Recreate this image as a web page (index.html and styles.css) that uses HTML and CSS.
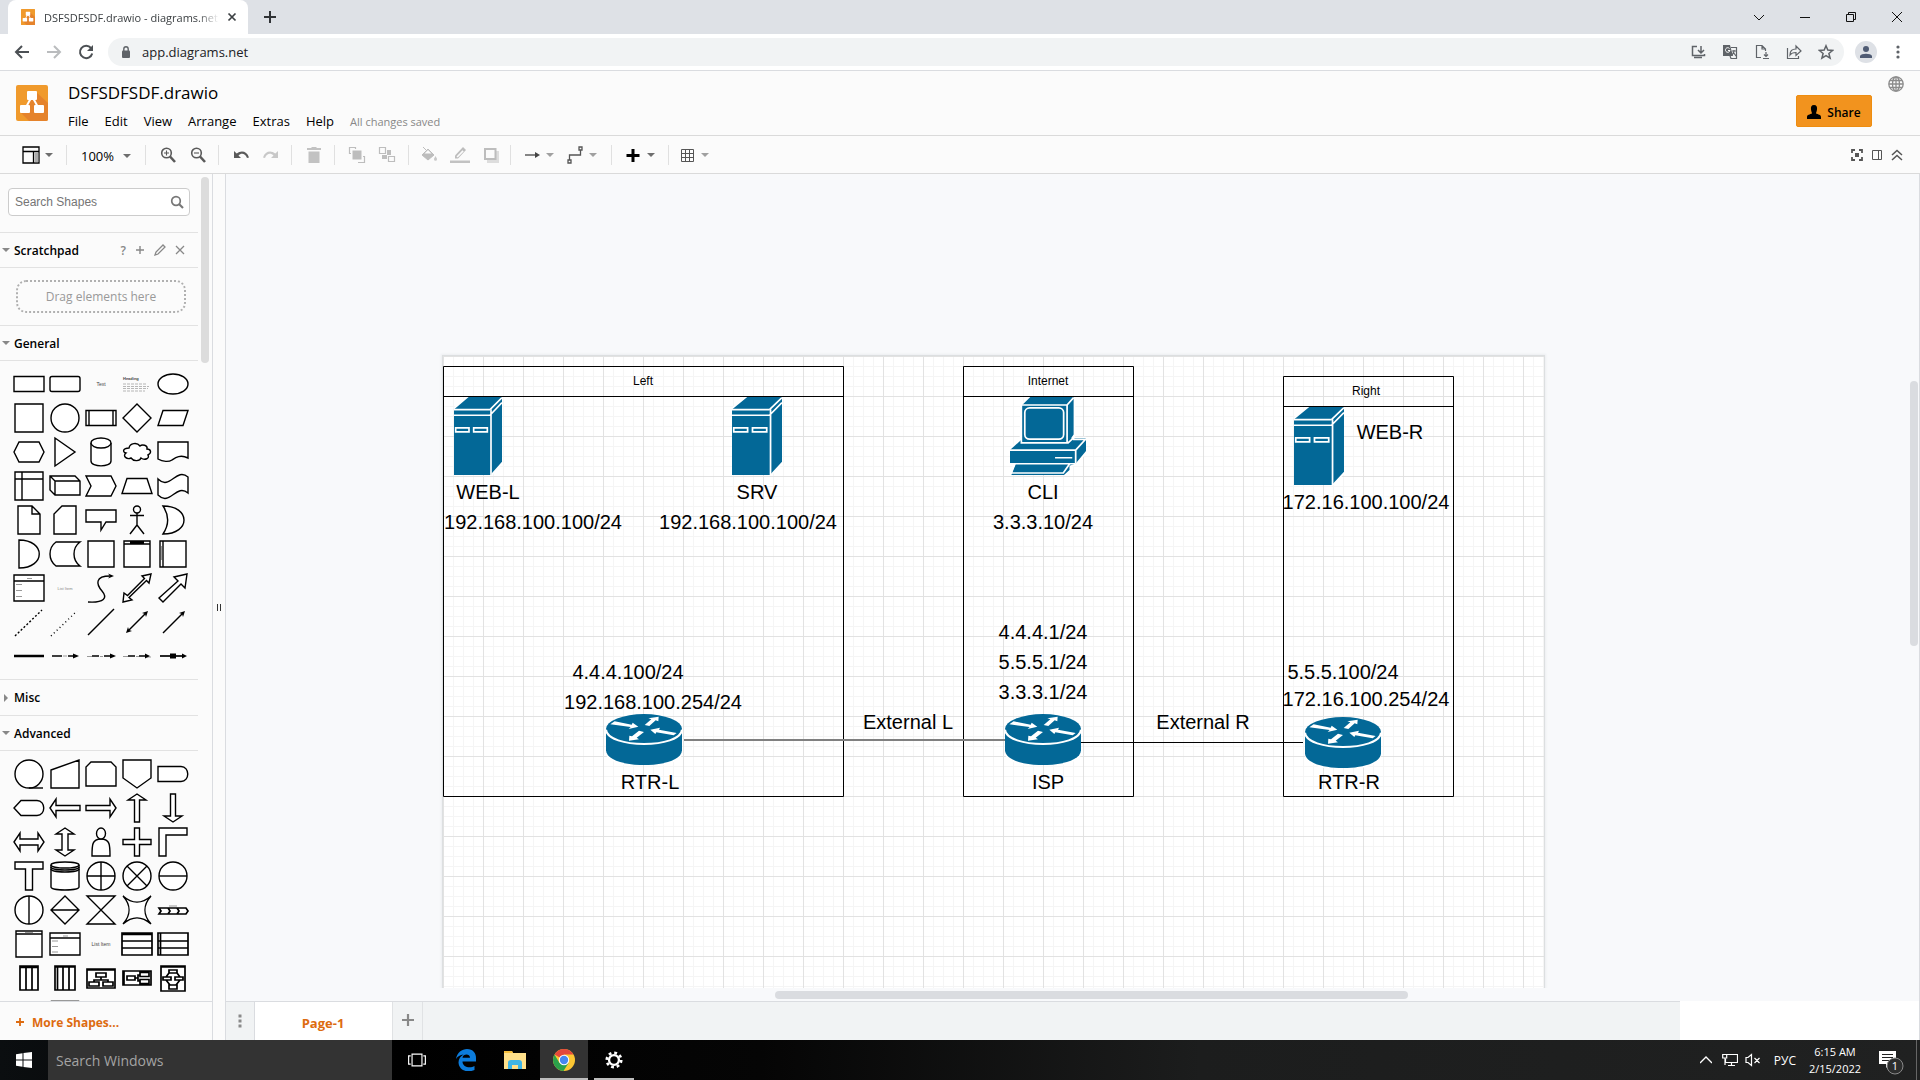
FILE: index.html
```html
<!DOCTYPE html>
<html lang="en">
<head>
<meta charset="utf-8">
<title>DSFSDFSDF.drawio - diagrams.net</title>
<link rel="stylesheet" href="styles.css">
</head>
<body>
<svg class="defs" aria-hidden="true">
  <symbol id="caret" viewBox="0 0 8 4"><path d="M0 0h8L4 4z" fill="currentColor"/></symbol>
  <symbol id="app-logo" viewBox="0 0 32 36" preserveAspectRatio="none">
    <rect width="32" height="36" rx="2" fill="#f09a2c"/>
    <path d="M19 6L32 18V34a2 2 0 0 1-2 2H13L5 28z" fill="#e5832c"/>
    <path d="M15 13L9 24M17 13l6 11" stroke="#fff" stroke-width="2"/>
    <rect x="11" y="6" width="10" height="9" rx="1" fill="#fff"/>
    <rect x="4" y="20" width="10" height="8" rx="1" fill="#fff"/>
    <rect x="18" y="20" width="10" height="8" rx="1" fill="#fff"/>
  </symbol>
  <symbol id="server" viewBox="72 155 144 235" preserveAspectRatio="none">
    <path d="M72 193L116 155H216V350L184 386V390H72z" fill="#036897" stroke="#fff" stroke-width="10" paint-order="stroke"/>
    <path d="M72 193H180M72 210H180L216 172M180 193L216 157M183 193V390" fill="none" stroke="#fff" stroke-width="5"/>
    <path d="M77 248h40v12H77zM131 248h41v12h-41z" fill="#036897" stroke="#fff" stroke-width="5"/>
  </symbol>
  <symbol id="router" viewBox="528 312 228 153">
    <path d="M528 357V421C530 480 754 480 756 421V357z" fill="#036897" stroke="#fff" stroke-width="10" paint-order="stroke"/>
    <ellipse cx="642" cy="357" rx="114" ry="45" fill="#036897"/>
    <path d="M528 359C532 416 752 416 756 359" fill="none" stroke="#fff" stroke-width="6"/>
    <path d="M554 334L605 344 608 338 625 350 596 357 602 351 541 343zM644 345L664 328 655 325 686 320 685 334 677 331 658 348zM661 359L690 353 687 359 740 369 731 376 679 367 676 372zM627 362L642 366 620 383 627 388 597 392 598 377 606 379z" fill="#fff"/>
  </symbol>
  <symbol id="pc" viewBox="203 155 221 235" preserveAspectRatio="none">
    <path d="M238 180L262 155H388V268L380 280H424V318L394 355 376 362 376 375 360 390H207L220 357H203V315L236 284z" fill="#036897" stroke="#fff" stroke-width="10" paint-order="stroke"/>
    <path d="M238 179H369L388 157M369 179V293M236 179V293H372L392 274M388 276V283H424M203 315H394L424 281M394 315V355M203 356H394M216 356L206 384H358L376 357M334 338H384" fill="none" stroke="#fff" stroke-width="5"/>
    <rect x="246" y="188" width="113" height="94" rx="14" fill="#036897" stroke="#fff" stroke-width="5"/>
  </symbol>
</svg>

<header class="tabstrip">
  <div class="tab">
    <svg class="i16" viewBox="0 0 32 36"><use href="#app-logo"/></svg>
    <span class="tab-title">DSFSDFSDF.drawio - diagrams.net</span>
    <button class="bare" aria-label="Close tab"><svg class="i10" viewBox="0 0 10 10"><path d="M1.500 1.500l7 7M8.500 1.500l-7 7" stroke="#3c4043" stroke-width="1.700"/></svg></button>
  </div>
  <button class="bare newtab" aria-label="New tab"><svg class="i12" viewBox="0 0 12 12"><path d="M6 0v12M0 6h12" stroke="#303336" stroke-width="2"/></svg></button>
  <div class="window-controls">
    <button class="bare" aria-label="Search tabs"><svg class="i12" viewBox="0 0 12 12"><path d="M1 4l5 5 5-5" class="ln"/></svg></button>
    <button class="bare" aria-label="Minimize"><svg class="i12" viewBox="0 0 12 12"><path d="M1 6.500h10" class="ln"/></svg></button>
    <button class="bare" aria-label="Restore"><svg class="i12" viewBox="0 0 12 12"><path d="M1.500 3.500h7v7h-7zM3.500 3V1.500h7v7H9" class="ln"/></svg></button>
    <button class="bare" aria-label="Close"><svg class="i12" viewBox="0 0 12 12"><path d="M1 1l10 10M11 1L1 11" class="ln"/></svg></button>
  </div>
</header>

<div class="addressbar">
  <button class="bare nav" aria-label="Back"><svg class="i16" viewBox="0 0 16 16"><path d="M15 8H2M8 2L2 8l6 6" stroke="#4c5054" stroke-width="2" fill="none"/></svg></button>
  <button class="bare nav" aria-label="Forward"><svg class="i16" viewBox="0 0 16 16"><path d="M1 8h13M8 2l6 6-6 6" stroke="#babcbe" stroke-width="2" fill="none"/></svg></button>
  <button class="bare nav" aria-label="Reload"><svg class="i16" viewBox="0 0 16 16"><path d="M13 4a6.200 6.200 0 1 0 1.200 5.500" stroke="#4c5054" stroke-width="2" fill="none"/><path d="M15 1v6H9z" fill="#4c5054"/></svg></button>
  <div class="omnibox">
    <svg class="i12" viewBox="0 0 12 12"><rect x="2" y="4.500" width="8" height="7.500" rx="1" fill="#5f6368"/><path d="M3.800 5V3a2.200 2.200 0 0 1 4.400 0v2" stroke="#5f6368" stroke-width="1.400" fill="none"/></svg>
    <input type="text" aria-label="Address" value="app.diagrams.net">
    <div class="omni-icons">
      <button class="bare" aria-label="Install"><svg class="i16" viewBox="0 0 16 16"><path d="M7 2.500H2.500v9h12V10M11 2v6M8 6l3 3 3-3M4 13.500h8" class="om"/></svg></button>
      <button class="bare" aria-label="Translate"><svg class="i16" viewBox="0 0 16 16"><path d="M1 1h7l3 11H1z" fill="#5f6368"/><path d="M9 3.500h5.500v11H9l-1-2.500M10 7h4M12 6v1c0 2-1 3-2 4M11 8l3 4" class="om thin"/><path d="M7.500 4.500a2.300 2.300 0 1 0 .5 2H6" stroke="#fff" fill="none"/></svg></button>
      <button class="bare" aria-label="Save page"><svg class="i16" viewBox="0 0 16 16"><path d="M7 13.500H2.500v-12H8L11.500 5v2M8 1.500V5h3M12 8v4M10 10.500l2 2 2-2M9 14.500h6" class="om thin"/></svg></button>
      <button class="bare" aria-label="Share page"><svg class="i16" viewBox="0 0 16 16"><path d="M1.500 4v10.500h11V12M4 11c0-4 2-6 6-6V2l5 5-5 4.500V8.500C7 8.500 5 9.500 4 11z" class="om thin"/></svg></button>
      <button class="bare" aria-label="Bookmark"><svg class="i16" viewBox="0 0 16 16"><path d="M8 1.800l1.800 4.300 4.700.4-3.600 3 1.200 4.700L8 11.700l-4.100 2.500 1.200-4.700-3.600-3 4.700-.4z" class="om"/></svg></button>
    </div>
  </div>
  <button class="bare profile" aria-label="Profile"><svg class="i12" viewBox="0 0 12 12"><circle cx="6" cy="3" r="3" fill="#4f5b73"/><path d="M0 12V10c1-3 11-3 12 0v2z" fill="#4f5b73"/></svg></button>
  <button class="bare more" aria-label="Menu"><svg class="i16" viewBox="0 0 16 16" fill="#5f6368"><circle cx="8" cy="3" r="1.600"/><circle cx="8" cy="8" r="1.600"/><circle cx="8" cy="13" r="1.600"/></svg></button>
</div>

<div class="appheader">
  <svg class="logo" viewBox="0 0 32 36"><use href="#app-logo"/></svg>
  <div class="titles">
    <h1>DSFSDFSDF.drawio</h1>
    <nav class="menus">
      <a href="#file">File</a><a href="#edit">Edit</a><a href="#view">View</a><a href="#arrange">Arrange</a><a href="#extras">Extras</a><a href="#help">Help</a><span class="status">All changes saved</span>
    </nav>
  </div>
  <button class="share"><svg class="i14" viewBox="0 0 14 14"><path d="M7 0C4.500 0 3.600 2 4 4.500 4.200 6.500 5 7.500 5 8.500 3 9.500 0 9.500 0 12v2h14v-2c0-2.500-3-2.500-5-3.500 0-1 .8-2 1-4C10.400 2 9.500 0 7 0z"/></svg>Share</button>
  <button class="bare globe" aria-label="Language"><svg class="i16" viewBox="0 0 16 16" fill="none" stroke="#8c8c8c" stroke-width="1.300"><circle cx="8" cy="8" r="7.200"/><ellipse cx="8" cy="8" rx="3.500" ry="7.200"/><path d="M8 1v14M1 8h14M2 4.500h12M2 11.500h12"/></svg></button>
</div>

<div class="toolbar">
  <div class="group g-panel"><button class="tool dark" aria-label="View"><svg class="i18" viewBox="0 0 18 18"><path d="M1 1h16v16H1zM1 5.500h16M11.500 5.500V17" fill="none" stroke="#000" stroke-width="1.300"/><path d="M12.500 6.500h3.700v9.700h-3.700z" fill="#aaa"/></svg><svg class="caret"><use href="#caret"/></svg></button></div>
  <div class="group g-zoom"><button class="tool zoomlevel">100%<svg class="caret"><use href="#caret"/></svg></button></div>
  <div class="group w73">
    <button class="tool" aria-label="Zoom in"><svg class="i18" viewBox="0 0 18 18"><circle cx="7.500" cy="7" r="4.800" class="tl"/><path d="M11 10.500l5 5.500" stroke="#5a5a5a" stroke-width="2.600"/><path d="M7.500 4.500v5M5 7h5" class="tl s1"/></svg></button>
    <button class="tool" aria-label="Zoom out"><svg class="i18" viewBox="0 0 18 18"><circle cx="7.500" cy="7" r="4.800" class="tl"/><path d="M11 10.500l5 5.500" stroke="#5a5a5a" stroke-width="2.600"/><path d="M5 7h5" class="tl s1"/></svg></button>
  </div>
  <div class="group w73">
    <button class="tool" aria-label="Undo"><svg class="i18" viewBox="0 0 18 18"><path d="M2 5v7h7L6.500 9.500C9 7 13 7 15 12l2-.6C15 5 9 4 4.700 7.500z" fill="#5a5a5a"/></svg></button>
    <button class="tool" aria-label="Redo"><svg class="i18" viewBox="0 0 18 18"><path d="M16 5v7H9l2.500-2.500C9 7 5 7 3 12l-2-.6C3 5 9 4 13.300 7.500z" fill="#c8c8c8"/></svg></button>
  </div>
  <div class="group w43"><button class="tool" aria-label="Delete"><svg class="i18" viewBox="0 0 18 18"><path d="M2 2h4l1-1h4l1 1h4v2H2zM3.500 5.500h11V17h-11z" fill="#c2c2c2"/></svg></button></div>
  <div class="group w74">
    <button class="tool" aria-label="To front"><svg class="i18" viewBox="0 0 18 18"><path d="M4.500 4.500h9v9h-9z" fill="#bdbdbd"/><path d="M3 7.500H1.500v-6h6V3M10 16.500h6.500v-6H15" class="tg"/></svg></button>
    <button class="tool" aria-label="To back"><svg class="i18" viewBox="0 0 18 18"><path d="M1.500 1.500h6v6h-6zM10.500 10.500h6v5h-6z" class="tg"/><path d="M9 4h4v5H9v4H4V9h5z" fill="#bdbdbd"/></svg></button>
  </div>
  <div class="group w102">
    <button class="tool" aria-label="Fill color"><svg class="i18" viewBox="0 0 18 18"><path d="M3 1l3 3M2 9l6-6 6 6-6 5z" fill="#bdbdbd" stroke="#bdbdbd"/><path d="M4.500 7.500L8 4l3.500 3.500z" fill="#fbfbfb"/><path d="M15.500 10c1 2 1.500 2 1.500 3.200a1.500 1.500 0 0 1-3 0c0-1.200.5-1.200 1.500-3.200z" fill="#c8c8c8"/></svg></button>
    <button class="tool" aria-label="Line color"><svg class="i20" viewBox="0 0 20 18"><path d="M5 12.500V9.500L13 1l3 3-8 8.500z" fill="#bdbdbd"/><path d="M6.500 10.500l6-6.300 1.200 1.200-6 6z" fill="#fbfbfb"/><path d="M0 14.500h20V17H0z" fill="#c2c2c2"/></svg></button>
    <button class="tool" aria-label="Shadow"><svg class="i18" viewBox="0 0 18 18"><path d="M5 5h12v12H5z" fill="#ddd"/><path d="M3 3h10.500v10H3z" fill="#fbfbfb" stroke="#bdbdbd" stroke-width="2"/></svg></button>
  </div>
  <div class="group w101">
    <button class="tool" aria-label="Connection"><svg class="i18" viewBox="0 0 18 18"><path d="M2 9h10" stroke="#444" stroke-width="1.300"/><path d="M12 6l5 3-5 3z" fill="#444"/></svg><svg class="caret faint"><use href="#caret"/></svg></button>
    <button class="tool" aria-label="Waypoints"><svg class="i18" viewBox="0 0 18 18"><path d="M3.500 14V9H14.500V4M2 14h3v3H2zM13 1h3v3h-3z" fill="none" stroke="#555" stroke-width="1.300"/></svg><svg class="caret faint"><use href="#caret"/></svg></button>
  </div>
  <div class="group w57"><button class="tool" aria-label="Insert"><svg class="i18" viewBox="0 0 18 18"><path d="M9 3v13M2.500 9.500h13" stroke="#000" stroke-width="3"/></svg><svg class="caret"><use href="#caret"/></svg></button></div>
  <div class="group g-last"><button class="tool" aria-label="Table"><svg class="i18" viewBox="0 0 18 18"><path d="M3.500 3.500h12v12h-12zM7.500 3.500v12M11.500 3.500v12M3.500 7.500h12M3.500 11.500h12" fill="none" stroke="#555"/></svg><svg class="caret faint"><use href="#caret"/></svg></button></div>
  <div class="toolbar-right">
    <button class="bare" aria-label="Fullscreen"><svg class="i12" viewBox="0 0 12 12"><path d="M4 1H1v3M8 1h3v3M1 8v3h3M11 8v3H8" fill="none" stroke="#555" stroke-width="1.800"/><path d="M4 4h4v4H4z" fill="#555"/></svg></button>
    <button class="bare" aria-label="Format"><svg class="i12" viewBox="0 0 12 12"><path d="M1.500 1.500h9v9h-9zM7.500 1.500v9" fill="none" stroke="#555"/></svg></button>
    <button class="bare" aria-label="Collapse"><svg class="i12" viewBox="0 0 12 12"><path d="M1 6l5-4.500L11 6M1 11l5-4.500 5 4.500" fill="none" stroke="#555" stroke-width="1.500"/></svg></button>
  </div>
</div>

<main class="workspace">
  <aside class="sidebar">
    <div class="sidebar-scroll">
      <div class="search"><input type="text" placeholder="Search Shapes" aria-label="Search Shapes"><svg class="i14" viewBox="0 0 14 14"><circle cx="6" cy="6" r="4.300" fill="none" stroke="#777" stroke-width="1.700"/><path d="M9 9l4 4" stroke="#777" stroke-width="2.200"/></svg></div>
      <section>
        <h2 class="sec"><svg class="caret"><use href="#caret"/></svg>Scratchpad
          <span class="sec-tools"><button class="bare help">?</button><button class="bare" aria-label="Add"><svg class="i12" viewBox="0 0 12 12"><path d="M6 2v8M2 6h8" class="sg"/></svg></button><button class="bare" aria-label="Edit"><svg class="i12" viewBox="0 0 12 12"><path d="M1 11l1-3 7-7 2 2-7 7z" class="sg thin"/></svg></button><button class="bare" aria-label="Close"><svg class="i12" viewBox="0 0 12 12"><path d="M2 2l8 8M10 2l-8 8" class="sg thin"/></svg></button></span></h2>
        <div class="scratch"><div class="drop">Drag elements here</div></div>
      </section>
      <section>
        <h2 class="sec"><svg class="caret"><use href="#caret"/></svg>General</h2>
        <div class="shapes">
          <a href="#s"><svg viewBox="0 0 36 34"><path d="M3 9.500h30v15H3z"/></svg></a>
          <a href="#s"><svg viewBox="0 0 36 34"><rect x="3" y="9.500" width="30" height="15" rx="2"/></svg></a>
          <a href="#s"><svg viewBox="0 0 36 34"><text x="18" y="19" class="t5" text-anchor="middle">Text</text></svg></a>
          <a href="#s"><svg viewBox="0 0 36 34"><text x="4" y="13" class="t4 b">Heading</text><path class="g dense" d="M4 17h23M4 19.500h26M4 21.500h25M4 24h22"/></svg></a>
          <a href="#s"><svg viewBox="0 0 36 34"><ellipse cx="18" cy="17" rx="15" ry="10"/></svg></a>
          <a href="#s"><svg viewBox="0 0 36 34"><path d="M4 3h28v28H4z"/></svg></a>
          <a href="#s"><svg viewBox="0 0 36 34"><circle cx="18" cy="17" r="14"/></svg></a>
          <a href="#s"><svg viewBox="0 0 36 34"><path d="M3 9.500h30v15H3zM6 9.500v15M30 9.500v15"/></svg></a>
          <a href="#s"><svg viewBox="0 0 36 34"><path d="M18 3l14 14-14 14L4 17z"/></svg></a>
          <a href="#s"><svg viewBox="0 0 36 34"><path d="M8 9.500h25l-5 15H3z"/></svg></a>
          <a href="#s"><svg viewBox="0 0 36 34"><path d="M8 7h20l5 10-5 10H8L3 17z"/></svg></a>
          <a href="#s"><svg viewBox="0 0 36 34"><path d="M8 3l20 14L8 31z"/></svg></a>
          <a href="#s"><svg viewBox="0 0 36 34"><path d="M8 8v18c0 6.500 20 6.500 20 0V8"/><ellipse cx="18" cy="8" rx="10" ry="5"/></svg></a>
          <a href="#s"><svg viewBox="0 0 36 34"><path d="M10 13c-6 0-7 4-3 5-4 3 1 7 5 5 3 4 9 3 10 0 4 3 9 0 7-3 4-2 3-6-1-6 1-4-5-5-7-3-3-4-10-3-11 2z"/></svg></a>
          <a href="#s"><svg viewBox="0 0 36 34"><path d="M3 7h30v16c-8-4-13 0-16 2s-9 2-14-1z"/></svg></a>
          <a href="#s"><svg viewBox="0 0 36 34"><path d="M4 3h28v28H4zM11 3v28M4 10h28"/></svg></a>
          <a href="#s"><svg viewBox="0 0 36 34"><path d="M3 7h25l5 5v14H8l-5-5zM3 7l5 5v14M8 12h25"/></svg></a>
          <a href="#s"><svg viewBox="0 0 36 34"><path d="M3 7h25l5 10-5 10H3l5-10z"/></svg></a>
          <a href="#s"><svg viewBox="0 0 36 34"><path d="M8 9.500h20l5 15H3z"/></svg></a>
          <a href="#s"><svg viewBox="0 0 36 34"><path d="M3 10c12 12 18-12 30-2v16c-12-10-18 14-30 2z"/></svg></a>
          <a href="#s"><svg viewBox="0 0 36 34"><path d="M7 3h14l8 8v20H7zM21 3v8h8"/></svg></a>
          <a href="#s"><svg viewBox="0 0 36 34"><path d="M15 3h14v28H7V11z"/></svg></a>
          <a href="#s"><svg viewBox="0 0 36 34"><path d="M3 7h30v12H23l-5 8v-8H3z"/></svg></a>
          <a href="#s"><svg viewBox="0 0 36 34"><circle cx="18" cy="6.500" r="3.500"/><path d="M18 10v12M11 12.500h14M18 22l-7 9M18 22l7 9"/></svg></a>
          <a href="#s"><svg viewBox="0 0 36 34"><path d="M8 3c28 0 28 28 0 28 6-9 6-19 0-28z"/></svg></a>
          <a href="#s"><svg viewBox="0 0 36 34"><path d="M8 3c27 0 27 28 0 28z"/></svg></a>
          <a href="#s"><svg viewBox="0 0 36 34"><path d="M9 5h24c-8 6-8 18 0 24H9C1 23 1 11 9 5z"/></svg></a>
          <a href="#s"><svg viewBox="0 0 36 34"><path d="M5 4h26v26H5z"/></svg></a>
          <a href="#s"><svg viewBox="0 0 36 34"><path d="M5 4h26v26H5zM5 7h26M11 5.500h14"/></svg></a>
          <a href="#s"><svg viewBox="0 0 36 34"><path d="M5 4h26v26H5zM8 4v26"/><path class="g" d="M6.500 9v14"/></svg></a>
          <a href="#s"><svg viewBox="0 0 36 34"><path d="M3 4h30v26H3zM3 10h30"/><path class="g" d="M16 7.500h5M5 13.500h6M5 19.500h6M5 25.500h6"/></svg></a>
          <a href="#s"><svg viewBox="0 0 36 34"><text x="18" y="19" class="t4 gray" text-anchor="middle">List Item</text></svg></a>
          <a href="#s"><svg viewBox="0 0 36 34"><path class="n" d="M5 31c16 1 20-4 14-11S12 5 27 5"/><path class="f" d="M31 5l-6-2.500L27 5l-2 2.500z"/></svg></a>
          <a href="#s"><svg viewBox="0 0 36 34"><path d="M32 3l-9 2 2.500 2.500L8.500 24.500 5 22 4 31l9-2-3-2.500L27.500 9.500 30 12z"/></svg></a>
          <a href="#s"><svg viewBox="0 0 36 34"><path d="M32 3l-13 3 4 4L4 27l4 4L26 13l4 4z"/></svg></a>
          <a href="#s"><svg viewBox="0 0 36 34"><path stroke-dasharray="2 2" d="M4 31L31 5"/></svg></a>
          <a href="#s"><svg viewBox="0 0 36 34"><path stroke-dasharray="1 3" d="M4 31L30 6"/></svg></a>
          <a href="#s"><svg viewBox="0 0 36 34"><path d="M5 30L31 4"/></svg></a>
          <a href="#s"><svg viewBox="0 0 36 34"><path d="M9 26L27 8"/><path class="f" d="M29 6l-6 2 3 1 1 3zM7 28l2-6 1 3 3 1z"/></svg></a>
          <a href="#s"><svg viewBox="0 0 36 34"><path d="M8 28L28 8"/><path class="f" d="M30 6l-6 2 3 1 1 3z"/></svg></a>
          <a href="#s"><svg viewBox="0 0 36 34"><path class="thick" d="M3 17h30"/></svg></a>
          <a href="#s"><svg viewBox="0 0 36 34"><path class="bold" d="M5 17h10M21 17h6"/><path class="g" d="M16 17h4"/><path class="f" d="M32 17l-6-2.500v5z"/></svg></a>
          <a href="#s"><svg viewBox="0 0 36 34"><path class="bold" d="M9 17h7M21 17h6"/><path class="g" d="M4 17.500h5M17 17.500h3"/><path class="f" d="M33 17l-6-2.500v5z"/></svg></a>
          <a href="#s"><svg viewBox="0 0 36 34"><path class="bold" d="M9 17h7M20 17h6"/><path class="g" d="M4 17.500h5M17 17.500h3M28 18h4"/><path class="f" d="M31 17l-5-2.500v5z"/></svg></a>
          <a href="#s"><svg viewBox="0 0 36 34"><path class="bold" d="M5 17h24"/><path class="f" d="M32 17l-5-2.500v5zM15 14.500h6v5h-6z"/></svg></a>
        </div>
      </section>
      <section><h2 class="sec closed"><svg class="caret"><use href="#caret"/></svg>Misc</h2></section>
      <section>
        <h2 class="sec"><svg class="caret"><use href="#caret"/></svg>Advanced</h2>
        <div class="shapes">
          <a href="#s"><svg viewBox="0 0 36 34"><circle cx="18" cy="17" r="14"/><path d="M18 31h14"/></svg></a>
          <a href="#s"><svg viewBox="0 0 36 34"><path d="M4 13L32 3v28H4z"/></svg></a>
          <a href="#s"><svg viewBox="0 0 36 34"><path d="M8 5h20l5 5v19H3V10z"/></svg></a>
          <a href="#s"><svg viewBox="0 0 36 34"><path d="M4 3h28v18L18 31 4 21z"/></svg></a>
          <a href="#s"><svg viewBox="0 0 36 34"><path d="M3 9.500h23c9 0 9 15 0 15H3z"/></svg></a>
          <a href="#s"><svg viewBox="0 0 36 34"><path d="M10 9.500h16c9 0 9 15 0 15H10L3 17z"/></svg></a>
          <a href="#s"><svg viewBox="0 0 36 34"><path d="M3 17l6-9v6.500h24v5H9V26z"/></svg></a>
          <a href="#s"><svg viewBox="0 0 36 34"><path d="M33 17l-6-9v6.500H3v5h24V26z"/></svg></a>
          <a href="#s"><svg viewBox="0 0 36 34"><path d="M18 3l9 6h-6.500v22h-5V9H9z"/></svg></a>
          <a href="#s"><svg viewBox="0 0 36 34"><path d="M18 31l9-6h-6.500V3h-5v22H9z"/></svg></a>
          <a href="#s"><svg viewBox="0 0 36 34"><path d="M3 17l6-9v6h18V8l6 9-6 9v-6H9v6z"/></svg></a>
          <a href="#s"><svg viewBox="0 0 36 34"><path d="M18 3l9 6h-6v16h6l-9 6-9-6h6V9H9z"/></svg></a>
          <a href="#s"><svg viewBox="0 0 36 34"><path d="M9 31c0-11 0-17 9-17s9 6 9 17z"/><ellipse cx="18" cy="8.500" rx="4.500" ry="5.500"/></svg></a>
          <a href="#s"><svg viewBox="0 0 36 34"><path d="M15.500 3h5v11.500H32v5H20.500V31h-5V19.500H4v-5h11.500z"/></svg></a>
          <a href="#s"><svg viewBox="0 0 36 34"><path d="M4 3h28v7H11v21H4z"/></svg></a>
          <a href="#s"><svg viewBox="0 0 36 34"><path d="M4 3h28v7H21.500v21h-7V10H4z"/></svg></a>
          <a href="#s"><svg viewBox="0 0 36 34"><path d="M4 6v22c0 4 28 4 28 0V6"/><ellipse cx="18" cy="6" rx="14" ry="3"/><path class="n" d="M4 8c0 4 28 4 28 0M4 10c0 4 28 4 28 0"/></svg></a>
          <a href="#s"><svg viewBox="0 0 36 34"><circle cx="18" cy="17" r="14"/><path d="M18 3v28M4 17h28"/></svg></a>
          <a href="#s"><svg viewBox="0 0 36 34"><circle cx="18" cy="17" r="14"/><path d="M8 7l20 20M28 7L8 27"/></svg></a>
          <a href="#s"><svg viewBox="0 0 36 34"><circle cx="18" cy="17" r="14"/><path d="M4 17h28"/></svg></a>
          <a href="#s"><svg viewBox="0 0 36 34"><circle cx="18" cy="17" r="14"/><path d="M18 3v28"/></svg></a>
          <a href="#s"><svg viewBox="0 0 36 34"><path d="M18 3l14 14-14 14L4 17zM4 17h28"/></svg></a>
          <a href="#s"><svg viewBox="0 0 36 34"><path d="M4 3h28L4 31h28z"/></svg></a>
          <a href="#s"><svg viewBox="0 0 36 34"><path d="M4 3c9 8 19 8 28 0-8 9-8 19 0 28-9-8-19-8-28 0 8-9 8-19 0-28z"/></svg></a>
          <a href="#s"><svg viewBox="0 0 36 34"><path class="bold" d="M4 15h27l2 3-2 3H4l2-3zM13 15l2 3-2 3M22 15l2 3-2 3"/><path class="g" d="M14 13h8"/></svg></a>
          <a href="#s"><svg viewBox="0 0 36 34"><path d="M5 4h26v26H5zM5 7h26"/><path class="g" d="M14 5.500h8"/></svg></a>
          <a href="#s"><svg viewBox="0 0 36 34"><path d="M3 6h30v22H3zM3 11h30"/><path class="g" d="M16 9h5M5 14h6M5 19.500h6M5 25h6"/></svg></a>
          <a href="#s"><svg viewBox="0 0 36 34"><text x="18" y="19" class="t5" text-anchor="middle">List Item</text></svg></a>
          <a href="#s"><svg viewBox="0 0 36 34"><path class="bold" d="M3 6h30v22H3zM3 7.500h30M3 14h30M3 21h30"/></svg></a>
          <a href="#s"><svg viewBox="0 0 36 34"><path class="bold" d="M3 6h30v22H3zM5.500 6v22M3 14h30M3 21h30"/></svg></a>
          <a href="#s"><svg viewBox="0 0 36 34"><path class="bold" d="M9 5h18v24H9zM9 6.500h18M15 5v24M21 5v24"/></svg></a>
          <a href="#s"><svg viewBox="0 0 36 34"><path class="bold" d="M8 5h20v24H8zM8 6h20M10.500 5v24M16 5v24M22 5v24"/></svg></a>
          <a href="#s"><svg viewBox="0 0 36 34"><path class="bold" d="M4 8h28v19H4zM4 9h28M13 12h10v4H13zM6 21h10v4H6zM20 21h10v4H20zM18 16v3M11 21v-2h14v2"/></svg></a>
          <a href="#s"><svg viewBox="0 0 36 34"><path class="bold" d="M4 10h28v14H4zM5 10v14M8 15h8v4H8zM21 11.500h9v4h-9zM21 18.500h9v4h-9zM16 17h3v-3h2M19 17v3h2"/></svg></a>
          <a href="#s"><svg viewBox="0 0 36 34"><path class="bold" d="M6 5h24v25H6zM6 6h24M14 9h8v3h-8zM8 16h8v3H8zM20 16h8v3h-8zM14 24h8v4h-8zM14 12l-3 4M22 12l3 4M11 19l4 5M25 19l-4 5"/></svg></a>
          <span></span>
          <a href="#s"><svg viewBox="0 0 36 34"><path class="g" d="M4 5.500h28v24H4z"/></svg></a>
        </div>
      </section>
      <div class="side-thumb"></div>
    </div>
    <a class="more-shapes" href="#more"><svg class="i10" viewBox="0 0 10 10"><path d="M5 1v8M1 5h8" stroke="#dd6b10" stroke-width="1.800"/></svg>More Shapes...</a>
  </aside>
  <div class="splitter"><i></i></div>

  <div class="editor">
    <div class="viewport">
      <div class="paper">
        <svg class="diagram" width="1101" height="632" viewBox="443 356 1101 632">
          <g fill="none" stroke="#000">
            <path d="M443.500 366.500h400v430h-400zM443.500 396.500h400"/>
            <path d="M963.500 366.500h170v430h-170zM963.500 396.500h170"/>
            <path d="M1283.500 376.500h170v420h-170zM1283.500 406.500h170"/>
            <path d="M684 740h322" stroke="#808080" stroke-width="2"/>
            <path d="M1080 742.500h223"/>
          </g>
          <use href="#server" x="454" y="397" width="48" height="78"/>
          <use href="#server" x="732" y="397" width="50" height="78"/>
          <use href="#server" x="1294" y="407" width="50" height="78"/>
          <use href="#pc" x="1010" y="397" width="76" height="78"/>
          <use href="#router" x="606" y="714" width="76" height="51"/>
          <use href="#router" x="1005" y="714" width="76" height="51"/>
          <use href="#router" x="1305" y="717" width="76" height="51"/>
          <g class="small">
            <text x="643" y="385">Left</text><text x="1048" y="385">Internet</text><text x="1366" y="395">Right</text>
          </g>
          <g class="label">
            <text x="488" y="499">WEB-L</text><text x="533" y="529">192.168.100.100/24</text>
            <text x="757" y="499">SRV</text><text x="748" y="529">192.168.100.100/24</text>
            <text x="1043" y="499">CLI</text><text x="1043" y="529">3.3.3.10/24</text>
            <text x="1390" y="439">WEB-R</text><text x="1366" y="509">172.16.100.100/24</text>
            <text x="628" y="679">4.4.4.100/24</text><text x="653" y="709">192.168.100.254/24</text><text x="650" y="789">RTR-L</text>
            <text x="908" y="729">External L</text>
            <text x="1043" y="639">4.4.4.1/24</text><text x="1043" y="669">5.5.5.1/24</text><text x="1043" y="699">3.3.3.1/24</text><text x="1048" y="789">ISP</text>
            <text x="1203" y="729">External R</text>
            <text x="1343" y="679">5.5.5.100/24</text><text x="1366" y="706">172.16.100.254/24</text><text x="1349" y="789">RTR-R</text>
          </g>
        </svg>
      </div>
      <div class="v-thumb"></div>
    </div>
    <div class="h-scroll"><div class="h-thumb"></div></div>
    <footer class="pages">
      <div class="pages-bar">
        <button class="bare page-menu" aria-label="Pages"><svg class="i16" viewBox="0 0 16 16" fill="#8a8a8a"><path d="M6.500 1.500h3v3h-3zM6.500 6.500h3v3h-3zM6.500 11.500h3v3h-3z"/></svg></button>
        <a class="page-tab" href="#page-1">Page-1</a>
        <button class="bare page-add" aria-label="Insert page"><svg class="i12" viewBox="0 0 12 12"><path d="M6 0v12M0 6h12" stroke="#888" stroke-width="2.200"/></svg></button>
      </div>
    </footer>
  </div>
</main>

<div class="taskbar">
  <button class="bare start" aria-label="Start"><svg class="i16" viewBox="0 0 16 16" fill="#fff"><path d="M0 2.200L6.500 1.300V7.500H0zM7.500 1.100L16 0v7.500H7.500zM0 8.500h6.500v6.200L0 13.800zM7.500 8.500H16V16l-8.500-1.100z"/></svg></button>
  <input class="win-search" type="text" placeholder="Search Windows" aria-label="Search Windows">
  <div class="apps">
    <button class="app" aria-label="Task View"><svg class="i20" viewBox="0 0 20 20" fill="none" stroke="#fff" stroke-width="1.300"><path d="M4.500 3.500h11v13h-11zM3 5.500H.7v9H3M17 5.500h2.300v9H17"/></svg></button>
    <button class="app" aria-label="Edge"><svg class="i22" viewBox="0 0 22 22"><path d="M1 10C2 3.500 7 0 12 0c6 0 9 4 9 9v3.500H7.500c0 6 8 7 12 4.500v4C13 24 4 22 3.500 13.500 3.500 10 5.500 7 8.500 5.500 5 6 2.500 7.500 1 10zM7.500 8.800H15C15 4.500 8 4.500 7.500 8.800z" fill="#0c7cdc"/></svg></button>
    <button class="app" aria-label="File Explorer"><svg class="i22" viewBox="0 0 22 22"><path d="M0 2h8l1 2h13v16H0z" fill="#ffe08a"/><path d="M0 2h8l1 2H0z" fill="#f7bf3c"/><path d="M4 20v-6c0-2 1-3 3-3h8c2 0 3 1 3 3v6h-4v-4H8v4z" fill="#3fb5e6"/></svg></button>
    <button class="app active" aria-label="Chrome"><svg class="i22" viewBox="0 0 22 22"><circle cx="11" cy="11" r="11" fill="#fbc633"/><path d="M11 11L1.500 5.500A11 11 0 0 1 20.500 5.500H11z" fill="#e3483c"/><path d="M1.500 5.500A11 11 0 0 0 10.500 22L15.500 14 6.500 14z" fill="#2ba14b"/><circle cx="11" cy="11" r="5.200" fill="#fff"/><circle cx="11" cy="11" r="4.200" fill="#4687f0"/></svg></button>
    <button class="app open" aria-label="Settings"><svg class="i20" viewBox="0 0 20 20"><circle cx="10" cy="10" r="5.500" fill="none" stroke="#fff" stroke-width="2.600"/><circle cx="10" cy="10" r="8" fill="none" stroke="#fff" stroke-width="3" stroke-dasharray="3.140 3.140"/></svg></button>
  </div>
  <div class="tray">
    <button class="bare" aria-label="Hidden icons"><svg class="i12" viewBox="0 0 12 12"><path d="M0 9l6-6 6 6" fill="none" stroke="#fff" stroke-width="1.400"/></svg></button>
    <button class="bare" aria-label="Network"><svg class="i16" viewBox="0 0 16 16" fill="none" stroke="#fff" stroke-width="1.200"><path d="M5 2.500h10.500v8H3.500V7M.7 2.500h4V6h-4zM9.500 11v2.500M6 13.500h7M3 6v7"/></svg></button>
    <button class="bare" aria-label="Volume"><svg class="i16" viewBox="0 0 16 16" fill="none" stroke="#fff" stroke-width="1.200"><path d="M1 5.500h2l3.500-3v11L3 10.500H1zM9.500 6l5 5M14.500 6l-5 5"/></svg></button>
    <span class="lang">РУС</span>
    <div class="clock"><span>6:15 AM</span><span>2/15/2022</span></div>
    <button class="bare notify" aria-label="Notifications"><svg viewBox="0 0 26 26" width="26" height="26"><path d="M1 2h17v13h-6l-4 4v-4H1z" fill="#fff"/><path d="M4 5.500h11M4 8.500h11M4 11.500h7" stroke="#222"/><circle cx="17" cy="17" r="8" fill="#2c2d2d" stroke="#8a8a8a"/><text x="17" y="21" text-anchor="middle" class="badge">1</text></svg></button>
  </div>
</div>
</body>
</html>
```
FILE: styles.css
```css
* { box-sizing: border-box; }

body {
  margin: 0;
  height: 100vh;
  display: flex;
  flex-direction: column;
  overflow: hidden;
  background: #fbfbfb;
  color: #000;
  font-family: "Open Sans", "Noto Sans", sans-serif;
  font-size: 12px;
}

svg { display: block; flex: none; }
a { color: inherit; text-decoration: none; }
button, input { font: inherit; color: inherit; }
.defs { position: absolute; width: 0; height: 0; }

.i10 { width: 10px; height: 10px; }
.i12 { width: 12px; height: 12px; }
.i14 { width: 14px; height: 14px; }
.i16 { width: 16px; height: 16px; }
.i18 { width: 18px; height: 18px; }
.i20 { width: 20px; height: 18px; }
.i22 { width: 22px; height: 22px; }
.caret { width: 8px; height: 4px; color: #6e6e6e; }
.caret.faint { color: #a0a0a0; }

.bare {
  display: flex;
  align-items: center;
  justify-content: center;
  padding: 0;
  border: 0;
  background: none;
}

/* browser frame */
.tabstrip {
  display: flex;
  align-items: center;
  flex: none;
  height: 34px;
  padding-left: 8px;
  background: #dee1e6;
}
.tab {
  display: flex;
  align-items: center;
  gap: 8px;
  width: 240px;
  height: 34px;
  padding: 0 11px 0 12px;
  border-radius: 8px 8px 0 0;
  background: #fff;
  color: #3c4043;
  font-size: 11px;
}
.tab-title {
  flex: 1;
  overflow: hidden;
  white-space: nowrap;
  mask-image: linear-gradient(90deg, #000 88%, transparent);
}
.newtab { width: 44px; height: 34px; }
.window-controls { display: flex; margin-left: auto; height: 28px; }
.window-controls .bare { width: 46px; }
.ln { fill: none; stroke: #111; stroke-width: 1; }

.addressbar {
  display: flex;
  align-items: center;
  flex: none;
  height: 37px;
  padding-left: 6px;
  border-bottom: 1px solid #dadce0;
  background: #fff;
}
.nav { width: 32px; height: 32px; }
.omnibox {
  display: flex;
  align-items: center;
  flex: 1;
  gap: 10px;
  height: 28px;
  margin-left: 6px;
  padding: 0 10px 0 12px;
  border-radius: 14px;
  background: #f1f3f4;
}
.omnibox input {
  flex: 1;
  padding: 0;
  border: 0;
  background: none;
  color: #202124;
  font-size: 13px;
}
.omni-icons { display: flex; gap: 16px; }
.om { fill: none; stroke: #5f6368; stroke-width: 1.5; }
.om.thin { stroke-width: 1.2; }
.profile {
  width: 22px;
  height: 22px;
  margin-left: 11px;
  border-radius: 50%;
  background: #dee1e6;
}
.more { width: 20px; margin: 0 12px 0 11px; }

/* application header */
.appheader {
  display: flex;
  align-items: flex-start;
  flex: none;
  height: 65px;
  padding: 5px 16px 0;
  border-bottom: 1px solid #dadada;
}
.logo { width: 32px; height: 36px; margin-top: 9px; }
.titles { flex: 1; margin: 5px 0 0 20px; }
h1 { margin: 0; font-size: 17px; font-weight: 400; line-height: 24px; }
.menus {
  display: flex;
  align-items: baseline;
  gap: 16px;
  margin-top: 6px;
  font-size: 13px;
  line-height: 20px;
}
.status { color: #888; font-size: 11px; }
.share {
  display: flex;
  align-items: center;
  justify-content: center;
  gap: 6px;
  width: 76px;
  height: 32px;
  margin-top: 19px;
  padding: 2px 0 0;
  border: 1px solid #ee8d10;
  border-radius: 2px;
  background: #f2931e;
  font-size: 12px;
  font-weight: 600;
}
.globe { width: 16px; height: 16px; margin-left: 16px; }

/* toolbar */
.toolbar {
  display: flex;
  align-items: center;
  flex: none;
  height: 38px;
  border-bottom: 1px solid #dadada;
}
.group {
  display: flex;
  align-items: center;
  justify-content: center;
  gap: 12px;
  height: 20px;
  border-right: 1px solid #e0e0e0;
}
.g-panel { width: 67px; justify-content: flex-start; padding-left: 22px; }
.g-zoom { width: 79px; justify-content: flex-start; padding: 2px 0 0 14px; }
.g-last { padding-left: 9px; border: 0; }
.w43 { width: 43px; padding-left: 1px; }
.w57 { width: 57px; padding-right: 2px; }
.w73 { width: 73px; padding-left: 2px; }
.w74 { width: 74px; }
.w101 { width: 101px; padding-right: 2px; }
.w102 { width: 102px; }
.tool {
  display: flex;
  align-items: center;
  gap: 5px;
  padding: 0;
  border: 0;
  background: none;
}
.zoomlevel { gap: 9px; font-size: 13px; }
.tl { fill: none; stroke: #5a5a5a; stroke-width: 1.6; }
.tl.s1 { stroke-width: 1.1; }
.tg { fill: none; stroke: #bdbdbd; stroke-width: 1.2; }
.toolbar-right { display: flex; gap: 8px; margin: 0 17px 0 auto; }

/* shape library */
.workspace { display: flex; flex: 1; min-height: 0; }
.sidebar {
  display: flex;
  flex-direction: column;
  flex: none;
  width: 213px;
  border-right: 1px solid #dadce0;
}
.sidebar-scroll { position: relative; flex: 1; overflow: hidden; padding-right: 14px; }
.search {
  display: flex;
  align-items: center;
  height: 28px;
  margin: 14px 8px 16px;
  padding: 0 5px 0 6px;
  border: 1px solid #ccc;
  border-radius: 4px;
  background: #fff;
}
.search input {
  flex: 1;
  min-width: 0;
  padding: 0;
  border: 0;
  background: none;
  font-family: "Liberation Sans", Arial, sans-serif;
  font-size: 12px;
}
.search input::placeholder { color: #757575; }
section { border-top: 1px solid #e2e2e2; }
.sec {
  display: flex;
  align-items: center;
  gap: 4px;
  height: 35px;
  margin: 0;
  padding-left: 2px;
  border-bottom: 1px solid #e2e2e2;
  font-size: 12px;
  font-weight: 600;
}
.sec .caret { color: #888; }
.sec.closed { border: 0; }
.closed .caret { transform: rotate(-90deg); }
.sec-tools { display: flex; gap: 8px; margin: 0 12px 0 auto; }
.help { color: #888; }
.sg { fill: none; stroke: #888; stroke-width: 1.4; }
.sg.thin { stroke-width: 1.3; }
.scratch { padding: 12px 12px 12px 16px; }
.drop {
  height: 33px;
  border: 2px dotted #b0b0b0;
  border-radius: 10px;
  color: #999;
  font-size: 12px;
  line-height: 30px;
  text-align: center;
}
.shapes {
  display: grid;
  grid-template-columns: repeat(5, 36px);
  grid-auto-rows: 34px;
  padding: 6px 0 6px 11px;
}
.shapes svg { width: 36px; height: 34px; fill: #fff; stroke: #000; stroke-width: 1.4; }
.shapes .n { fill: none; }
.shapes .f { fill: #000; stroke: none; }
.shapes .g { stroke: #999; stroke-width: 1; }
.shapes .dense { stroke-dasharray: 3 1; stroke-width: 0.7; }
.shapes .bold { stroke-width: 1.7; }
.shapes .thick { stroke-width: 2.5; }
.shapes text { stroke: none; fill: #444; font-family: "Liberation Sans", Arial, sans-serif; }
.t5 { font-size: 5px; }
.t4 { font-size: 4px; }
.b { font-weight: 700; }
.shapes .gray { fill: #888; }
.side-thumb {
  position: absolute;
  top: 3px;
  right: 3px;
  width: 8px;
  height: 186px;
  border-radius: 4px;
  background: #dcdcdc;
}
.more-shapes {
  display: flex;
  align-items: center;
  gap: 7px;
  flex: none;
  height: 39px;
  padding: 2px 0 0 15px;
  border-top: 1px solid #dadce0;
  color: #dd6b10;
  font-size: 12px;
  font-weight: 700;
}
.splitter {
  display: flex;
  align-items: center;
  justify-content: center;
  flex: none;
  width: 13px;
  border-right: 1px solid #dadce0;
}
.splitter i { width: 4px; height: 7px; border: solid #333; border-width: 0 1px; }

/* canvas */
.editor {
  display: flex;
  flex-direction: column;
  flex: 1;
  min-width: 0;
  border-right: 1px solid #dadce0;
  background: #f8f9fb;
}
.viewport { position: relative; flex: 1; overflow: hidden; padding: 181px 0 0 216px; }
.paper {
  width: 1103px;
  min-height: 700px;
  border: 1px solid #dcdfe0;
  box-shadow: 0 0 2px 1px #eceef0;
  background-color: #fff;
  background-image:
    linear-gradient(90deg, #e2e2e2 1px, transparent 1px),
    linear-gradient(#e2e2e2 1px, transparent 1px),
    linear-gradient(90deg, #f5f5f5 1px, transparent 1px),
    linear-gradient(#f5f5f5 1px, transparent 1px);
  background-size: 40px 40px, 40px 40px, 10px 10px, 10px 10px;
}
.diagram text { font-family: "Liberation Sans", Arial, sans-serif; text-anchor: middle; }
.small { font-size: 12px; }
.label { font-size: 20px; }
.v-thumb {
  position: absolute;
  top: 207px;
  right: 1px;
  width: 8px;
  height: 265px;
  border-radius: 4px;
  background: #dadce0;
}
.h-scroll { flex: none; height: 13px; padding-top: 3px; }
.h-thumb { width: 633px; height: 8px; margin-left: 549px; border-radius: 4px; background: #dadce0; }
.pages { display: flex; flex: none; height: 39px; padding-right: 239px; background: #fff; }
.pages-bar { display: flex; flex: 1; border-top: 1px solid #dadce0; background: #f1f3f4; }
.page-menu { width: 29px; border-right: 1px solid #dadce0; }
.page-tab {
  width: 137px;
  padding-right: 1px;
  background: #fff;
  color: #dd6b10;
  font-size: 13px;
  font-weight: 700;
  line-height: 42px;
  text-align: center;
}
.page-add { width: 31px; padding-bottom: 3px; border: solid #e0e2e4; border-width: 0 1px; }

/* system taskbar */
.taskbar {
  display: flex;
  flex: none;
  height: 40px;
  background: linear-gradient(90deg, #0b0e10, #000 400px, #050505 760px, #1c1d1d 1200px, #202121);
  color: #fff;
}
.start { width: 48px; }
.win-search {
  width: 344px;
  padding: 0 8px;
  border: 0;
  background: #333;
  font-size: 14px;
}
.win-search::placeholder { color: #a4a4a4; }
.apps { display: flex; padding-left: 1px; }
.app {
  display: flex;
  align-items: center;
  justify-content: center;
  width: 48px;
  margin-right: 1px;
  padding: 0;
  border: 0;
  background: none;
}
.app.active { background: #333; border-bottom: 2px solid #bdbdbd; padding-top: 2px; }
.app.open { width: 40px; margin-left: 5px; border-bottom: 2px solid #bdbdbd; padding-top: 2px; }
.tray { display: flex; align-items: center; gap: 7px; margin-left: auto; padding-right: 3px; }
.tray .bare:first-child { margin-right: 3px; }
.lang { margin-left: 6px; font-size: 12px; }
.clock {
  display: flex;
  flex-direction: column;
  align-items: center;
  width: 64px;
  font-size: 11px;
  line-height: 17px;
}
.notify { height: 40px; padding: 4px 12px 0 4px; border-right: 1px solid #666; }
.badge { fill: #fff; font-size: 11px; }
```
